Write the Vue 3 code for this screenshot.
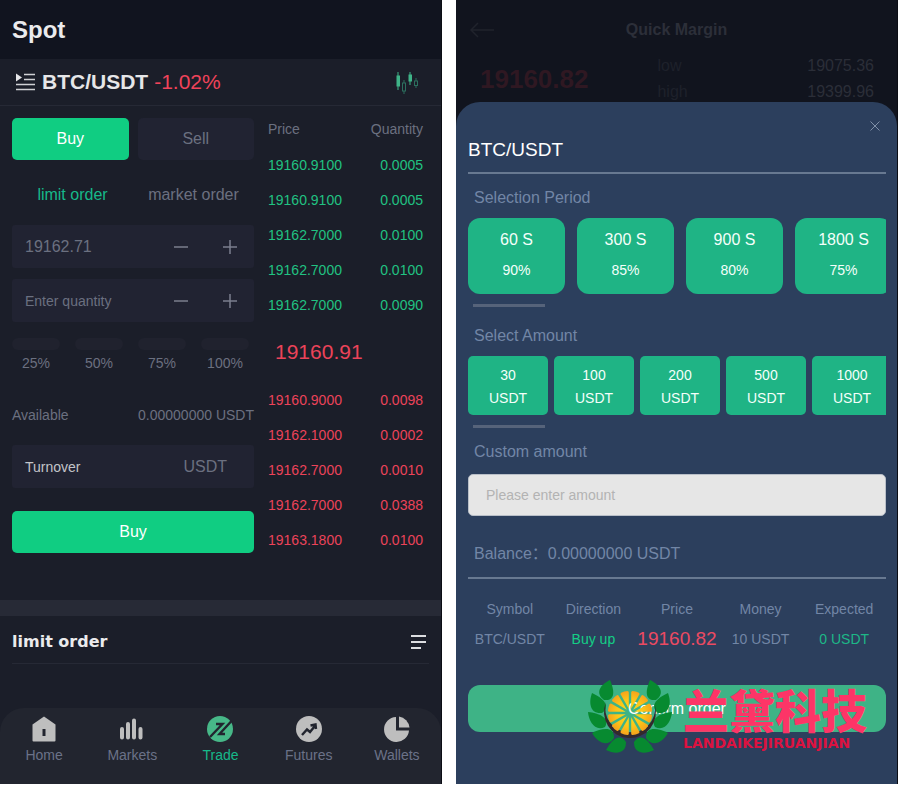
<script setup>
import { ref } from 'vue'

const asks = [
  ['19160.9100', '0.0005'],
  ['19160.9100', '0.0005'],
  ['19162.7000', '0.0100'],
  ['19162.7000', '0.0100'],
  ['19162.7000', '0.0090'],
]
const bids = [
  ['19160.9000', '0.0098'],
  ['19162.1000', '0.0002'],
  ['19162.7000', '0.0010'],
  ['19162.7000', '0.0388'],
  ['19163.1800', '0.0100'],
]
const shares = ['25%', '50%', '75%', '100%']
const periods = [
  ['60 S', '90%'],
  ['300 S', '85%'],
  ['900 S', '80%'],
  ['1800 S', '75%'],
]
const amounts = ['30', '100', '200', '500', '1000']

const price = ref('19162.71')
const quantity = ref('')
const custom = ref('')

// Leaf outline between a tip and a base, bulging by w on both sides
function leaf([x1, y1, x2, y2, w]) {
  const dx = x2 - x1
  const dy = y2 - y1
  const len = Math.hypot(dx, dy)
  const nx = (-dy / len) * w
  const ny = (dx / len) * w
  const p = (t, s) => `${x1 + dx * t + nx * s} ${y1 + dy * t + ny * s}`
  return `M${x1} ${y1}C${p(0.3, 0.8)} ${p(0.8, 1.3)} ${x2} ${y2}C${p(0.9, -1.3)} ${p(0.4, -0.8)} ${x1} ${y1}Z`
}
const leaves = [
  [22, 0, 16, 20, 9],
  [4, 13, 14, 33, 9],
  [0, 32, 17, 47, 8],
  [4, 53, 26, 58, 9],
  [18, 70, 38, 62, 9],
].map(leaf)

// Citrus segments, twelve around the centre
const segments = Array.from({ length: 12 }, (_, i) => i * 30 + 15)
</script>

<template>
  <div class="page">
    <main class="panel spot">
      <header class="spot-head"><h1>Spot</h1></header>

      <div class="pair">
        <svg class="pair-menu" viewBox="0 0 19 18" aria-hidden="true">
          <path d="M0 0.500L6 4.500L0 8.500Z" fill="#e6e6e8" />
          <path d="M8 1.500H19M8 6.500H19M0 11.500H19M0 16.500H19" stroke="#d0d1d5" stroke-width="1.600" />
        </svg>
        <h2>BTC/USDT</h2>
        <span class="change">-1.02%</span>
        <svg class="candles" viewBox="0 0 24 24" aria-hidden="true">
          <g fill="#3fb488" stroke="#3fb488">
            <path d="M3 2V20" />
            <rect x="2" y="6" width="2.500" height="10" />
            <path d="M15 2V15" />
            <rect x="14" y="5" width="2.500" height="6" />
          </g>
          <g fill="none" stroke="#2c6f5e">
            <path d="M9 10V13M9 21V24M21 8V11M21 15V18" />
            <rect x="7.500" y="13" width="3" height="8" />
            <rect x="19.500" y="11" width="3" height="4.500" />
          </g>
        </svg>
      </div>

      <div class="trade">
        <form class="ticket" @submit.prevent>
          <div class="sides">
            <button type="button" class="btn buy">Buy</button>
            <button type="button" class="btn sell">Sell</button>
          </div>
          <div class="types">
            <button type="button" class="active">limit order</button>
            <button type="button">market order</button>
          </div>
          <div class="field">
            <input v-model="price" class="big" aria-label="Price" />
            <button type="button" aria-label="Decrease price"><svg viewBox="0 0 16 16"><path d="M1 8H15" /></svg></button>
            <button type="button" aria-label="Increase price"><svg viewBox="0 0 16 16"><path d="M1 8H15M8 1V15" /></svg></button>
          </div>
          <div class="field">
            <input v-model="quantity" placeholder="Enter quantity" aria-label="Quantity" />
            <button type="button" aria-label="Decrease quantity"><svg viewBox="0 0 16 16"><path d="M1 8H15" /></svg></button>
            <button type="button" aria-label="Increase quantity"><svg viewBox="0 0 16 16"><path d="M1 8H15M8 1V15" /></svg></button>
          </div>
          <div class="shares">
            <button v-for="s in shares" :key="s" type="button"><i></i>{{ s }}</button>
          </div>
          <div class="available"><span>Available</span><span>0.00000000 USDT</span></div>
          <div class="turnover"><span>Turnover</span><span class="unit">USDT</span></div>
          <button class="btn buy submit">Buy</button>
        </form>

        <table class="book">
          <thead>
            <tr><th>Price</th><th>Quantity</th></tr>
          </thead>
          <tbody class="up">
            <tr v-for="(r, i) in asks" :key="i"><td>{{ r[0] }}</td><td>{{ r[1] }}</td></tr>
          </tbody>
          <tbody class="down">
            <tr><td colspan="2" class="last">19160.91</td></tr>
            <tr v-for="(r, i) in bids" :key="i"><td>{{ r[0] }}</td><td>{{ r[1] }}</td></tr>
          </tbody>
        </table>
      </div>

      <section class="orders">
        <div class="orders-head">
          <h3>limit order</h3>
          <svg viewBox="0 0 16 14" aria-hidden="true"><path d="M0 1H15M0 7H15M0 13H10" stroke="#dcdde0" stroke-width="1.800" /></svg>
        </div>
      </section>

      <nav class="tabs">
        <a href="#home">
          <svg viewBox="0 0 26 26"><path fill-rule="evenodd" d="M13 0.500L24.500 8.500V24.500Q24.500 25.500 23.500 25.500H2.500Q1.500 25.500 1.500 24.500V8.500ZM11.500 13V20H14.500V13Z" /></svg>
          Home
        </a>
        <a href="#markets">
          <svg viewBox="0 0 26 26"><path stroke-width="4" stroke-linecap="round" stroke="#bebebe" d="M3 13V21.500M9 8V21.500M15 4.500V21.500M21.500 13V21.500" /></svg>
          Markets
        </a>
        <a href="#trade" class="active">
          <svg viewBox="0 0 26 26">
            <circle cx="13" cy="13" r="13" />
            <path class="cut" d="M9 8H15.500L3 21M24.500 5L12.500 18H18" />
          </svg>
          Trade
        </a>
        <a href="#futures">
          <svg viewBox="0 0 26 26">
            <circle cx="13" cy="13" r="13" />
            <path class="cut" d="M6 19L11 13.500L14 16L18.500 10.500M14.500 9.500L19.500 8.500L20 13" />
          </svg>
          Futures
        </a>
        <a href="#wallets">
          <svg viewBox="0 0 26 26">
            <path d="M12 1V14.500H25A12.500 12.500 0 1 1 12 1Z" />
            <path d="M15 0.500A12.500 12.500 0 0 1 25.500 11.500H15Z" />
          </svg>
          Wallets
        </a>
      </nav>
    </main>

    <section class="panel margin">
      <div class="behind">
        <div class="behind-head">
          <svg viewBox="0 0 24 16" aria-hidden="true"><path d="M24 8H1M8 1L1 8L8 15" fill="none" stroke="#20232c" stroke-width="1.500" /></svg>
          <h2>Quick Margin</h2>
        </div>
        <div class="quote">
          <strong>19160.82</strong>
          <dl>
            <dt>low</dt><dd>19075.36</dd>
            <dt>high</dt><dd>19399.96</dd>
          </dl>
        </div>
      </div>

      <form class="sheet" @submit.prevent>
        <button type="button" class="close" aria-label="Close">
          <svg viewBox="0 0 10 10"><path d="M0.500 0.500L9.500 9.500M9.500 0.500L0.500 9.500" /></svg>
        </button>
        <h2>BTC/USDT</h2>

        <h3>Selection Period</h3>
        <div class="strip periods">
          <button v-for="p in periods" :key="p[0]" type="button"><b>{{ p[0] }}</b><span>{{ p[1] }}</span></button>
        </div>
        <div class="thumb"></div>

        <h3>Select Amount</h3>
        <div class="strip amounts">
          <button v-for="a in amounts" :key="a" type="button"><span>{{ a }}</span><span>USDT</span></button>
        </div>
        <div class="thumb"></div>

        <label for="custom">Custom amount</label>
        <input id="custom" v-model="custom" placeholder="Please enter amount" />
        <p class="balance">Balance：0.00000000 USDT</p>

        <table class="summary">
          <thead>
            <tr><th>Symbol</th><th>Direction</th><th>Price</th><th>Money</th><th>Expected</th></tr>
          </thead>
          <tbody>
            <tr>
              <td>BTC/USDT</td>
              <td class="long">Buy up</td>
              <td class="price">19160.82</td>
              <td>10 USDT</td>
              <td class="gain">0 USDT</td>
            </tr>
          </tbody>
        </table>

        <div class="confirm">
          <button>Confirm order</button>
          <div class="brand">
            <svg viewBox="0 0 84 74" aria-hidden="true">
              <defs>
                <radialGradient id="citrus" gradientUnits="userSpaceOnUse" cx="0" cy="0" r="23">
                  <stop offset="0" stop-color="#ffe21a" />
                  <stop offset="0.600" stop-color="#fcc419" />
                  <stop offset="1" stop-color="#f5a01c" />
                </radialGradient>
              </defs>
              <g fill="#078a30">
                <path v-for="(d, i) in leaves" :key="'l' + i" :d="d" />
                <g transform="translate(84 0) scale(-1 1)">
                  <path v-for="(d, i) in leaves" :key="'r' + i" :d="d" />
                </g>
              </g>
              <path fill="#33292c" d="M18 22A26 26 0 1 0 67 25A25 24.500 0 1 1 18 22Z" />
              <g transform="translate(42 33)" fill="url(#citrus)">
                <path v-for="a in segments" :key="a" :transform="`rotate(${a})`" d="M0 -4.500L-4.200 -20.300Q-4.400 -21.500 -3.300 -21.900Q0 -22.700 3.300 -21.900Q4.400 -21.500 4.200 -20.300Z" />
              </g>
            </svg>
            <div class="brand-text">
              <span lang="zh-CN">兰黛科技</span>
              <small>LANDAIKEJIRUANJIAN</small>
            </div>
          </div>
        </div>
      </form>
    </section>
  </div>
</template>

<style>
body {
  margin: 0;
  background: #fff;
}
</style>

<style scoped>
* {
  box-sizing: border-box;
}
h1, h2, h3, p, dl, dd {
  margin: 0;
}
button, input {
  margin: 0;
  padding: 0;
  border: 0;
  background: none;
  color: inherit;
  font: inherit;
}
svg {
  display: block;
}
table {
  border-collapse: collapse;
}
th, td {
  padding: 0;
  font-weight: 400;
}
.page {
  display: flex;
  gap: 14px;
  font-family: "Liberation Sans", "Noto Sans CJK SC", sans-serif;
  font-size: 14px;
  line-height: 20px;
  color: #6b7080;
}
.panel {
  flex: 1 1 0;
  min-width: 0;
  display: flex;
  flex-direction: column;
  border-right: 1px solid #0b0d14;
}
.spot {
  background: #1b1e29;
}
.spot-head {
  padding: 14px 12px 13px;
  background: #11141f;
}
.spot-head h1 {
  font-size: 24px;
  line-height: 32px;
  color: #ebebed;
}
.pair {
  display: flex;
  align-items: center;
  height: 47px;
  padding: 0 22px 0 16px;
  border-bottom: 1px solid #262935;
  font-size: 21px;
}
.pair-menu {
  width: 19px;
  height: 18px;
  margin-right: 7px;
}
.pair h2 {
  font-size: 21px;
  color: #e6e6e8;
}
.change {
  margin-left: 6px;
  color: #f0435a;
}
.candles {
  width: 24px;
  height: 24px;
  margin-left: auto;
}
.trade {
  display: grid;
  grid-template-columns: minmax(0, 242fr) minmax(0, 155fr);
  align-items: start;
  gap: 14px;
  padding: 12px 18px 43px 12px;
}
.ticket {
  display: flex;
  flex-direction: column;
}
.btn {
  height: 42px;
  border-radius: 5px;
  font-size: 16px;
}
.buy {
  background: #10cd82;
  color: #fff;
}
.sell {
  background: #212332;
}
.sides {
  display: grid;
  grid-template-columns: 1fr 1fr;
  gap: 9px;
}
.types {
  display: grid;
  grid-template-columns: 1fr 1fr;
  height: 65px;
  padding-top: 4px;
  font-size: 16px;
}
.types .active {
  color: #16b98a;
}
.field, .turnover {
  display: flex;
  align-items: center;
  height: 43px;
  padding-left: 13px;
  background: #212332;
  border-radius: 3px;
}
.field {
  margin-bottom: 11px;
}
.field input {
  flex: 1 1 0;
  min-width: 0;
  height: 43px;
  outline: none;
}
.field .big {
  font-size: 16px;
}
.field input::placeholder {
  color: #6b7080;
  opacity: 1;
}
.field button {
  display: grid;
  place-items: center;
  width: 49px;
  height: 43px;
}
.field svg {
  width: 16px;
  height: 16px;
  stroke: #7b7f8e;
  stroke-width: 1.5;
}
.shares {
  display: grid;
  grid-template-columns: repeat(4, 1fr);
  gap: 15px;
  padding: 5px 5px 0 0;
}
.shares i {
  display: block;
  height: 12px;
  margin-bottom: 3px;
  border-radius: 6px;
  background: #20222e;
}
.available {
  display: flex;
  justify-content: space-between;
  padding: 32px 0 20px;
}
.turnover {
  justify-content: space-between;
  padding-right: 27px;
  color: #c3c4c9;
}
.unit {
  font-size: 16px;
  color: #6b7080;
}
.submit {
  margin-top: 23px;
}
.book {
  width: 100%;
}
.book th {
  height: 29px;
  line-height: 22px;
  vertical-align: top;
  text-align: left;
}
.book td {
  height: 35px;
}
.book th + th, .book td + td {
  text-align: right;
}
.up {
  color: #21c282;
}
.down {
  color: #ec4359;
}
.book .last {
  height: 60px;
  padding-left: 7px;
  font-size: 21px;
}
.orders {
  padding: 0 12px 44px;
  border-top: 16px solid #272a36;
}
.orders-head {
  display: flex;
  align-items: center;
  justify-content: space-between;
  height: 48px;
  padding: 4px 2px 0 0;
  border-bottom: 1px solid #262935;
}
.orders h3 {
  font: 700 16px/20px "DejaVu Sans", sans-serif;
  color: #ebebed;
}
.orders svg {
  width: 16px;
  height: 14px;
}
.tabs {
  display: grid;
  grid-template-columns: repeat(5, 1fr);
  height: 76px;
  padding-top: 8px;
  border-radius: 24px 24px 0 0;
  background: #22252f;
}
.tabs a {
  display: flex;
  flex-direction: column;
  align-items: center;
  gap: 3px;
  color: #6b7288;
  text-decoration: none;
}
.tabs svg {
  width: 26px;
  height: 26px;
  fill: #bebebe;
}
.tabs .active {
  color: #16b98a;
}
.tabs .active svg {
  fill: #47b888;
}
.tabs .cut {
  fill: none;
  stroke: #22252f;
  stroke-width: 2.4;
}
.margin {
  background: #11141e;
}
.behind-head {
  display: grid;
  grid-template-columns: 24px 1fr 24px;
  align-items: center;
  height: 53px;
  padding: 7px 14px 0;
  text-align: center;
}
.behind-head h2 {
  font-size: 16px;
  color: #2c2f39;
}
.quote {
  display: grid;
  grid-template-columns: 177fr 216fr;
  align-items: center;
  padding: 0 23px 0 24px;
}
.quote strong {
  font-size: 26px;
  color: #2f1822;
}
.quote dl {
  display: grid;
  grid-template-columns: 1fr auto;
  font-size: 16px;
  line-height: 26px;
}
.quote dt {
  color: #1e212b;
}
.quote dd {
  color: #2b2e38;
}
.sheet {
  position: relative;
  flex: 1;
  margin-top: -3px;
  padding: 38px 11px 44px 12px;
  border-radius: 24px 24px 0 0;
  background: #2c3f5d;
  color: #7286a6;
}
.close {
  position: absolute;
  top: 14px;
  right: 12px;
  padding: 5px;
}
.close svg {
  width: 10px;
  height: 10px;
  stroke: #8090a8;
}
.sheet h2 {
  padding-bottom: 12px;
  border-bottom: 2px solid #687991;
  font-size: 19px;
  font-weight: 400;
  color: #fff;
}
.sheet h3, .sheet label {
  display: block;
  padding: 14px 6px 10px;
  font-size: 16px;
  font-weight: 400;
}
.sheet label {
  padding-bottom: 12px;
}
.strip {
  display: flex;
  overflow: hidden;
}
.strip button {
  display: flex;
  flex-direction: column;
  align-items: center;
  flex-shrink: 0;
  background: #1fb485;
  color: #f4fffa;
  font-weight: 400;
}
.thumb {
  width: 72px;
  height: 3px;
  margin: 10px 0 0 5px;
  background: #56637a;
}
.periods + .thumb {
  margin-bottom: 19px;
}
.periods + .thumb + h3 {
  padding-top: 0;
}
.periods {
  gap: 12px;
}
.periods button {
  width: 97px;
  height: 76px;
  padding-top: 12px;
  gap: 10px;
  border-radius: 12px;
}
.periods b {
  font-size: 16px;
  font-weight: 400;
}
.amounts {
  gap: 6px;
}
.amounts button {
  width: 80px;
  height: 59px;
  padding-top: 9px;
  gap: 3px;
  border-radius: 5px;
}
.sheet input {
  display: block;
  width: 100%;
  height: 42px;
  padding: 0 17px;
  border: 1px solid #b9bfc8;
  border-radius: 5px;
  background: #e6e6e6;
  color: #333;
}
.sheet input::placeholder {
  color: #b3b3b3;
  opacity: 1;
}
.balance {
  padding: 28px 6px 13px;
  border-bottom: 2px solid #687991;
  font-size: 16px;
}
.summary {
  width: 100%;
  margin-top: 15px;
  table-layout: fixed;
  text-align: center;
}
.summary th, .summary td {
  height: 30px;
  white-space: nowrap;
}
.summary .long {
  color: #14cf86;
}
.summary .price {
  font-size: 19px;
  color: #ec4a62;
}
.summary .gain {
  color: #1db887;
}
.confirm {
  position: relative;
  margin-top: 31px;
}
.confirm > button {
  width: 100%;
  height: 47px;
  border-radius: 12px;
  background: #3eb386;
  color: #fff;
  font-size: 16px;
}
.brand {
  position: absolute;
  top: -5px;
  right: 19px;
  display: flex;
  gap: 11px;
  pointer-events: none;
}
.brand svg {
  width: 84px;
  height: 74px;
}
.brand-text {
  display: flex;
  flex-direction: column;
  padding-top: 3px;
  white-space: nowrap;
}
.brand-text span {
  font: 900 46px/50px "Noto Sans CJK SC", sans-serif;
  color: #fd3567;
}
.brand-text small {
  font: 700 14px/20px "DejaVu Sans", sans-serif;
  color: #dc1240;
}
</style>
